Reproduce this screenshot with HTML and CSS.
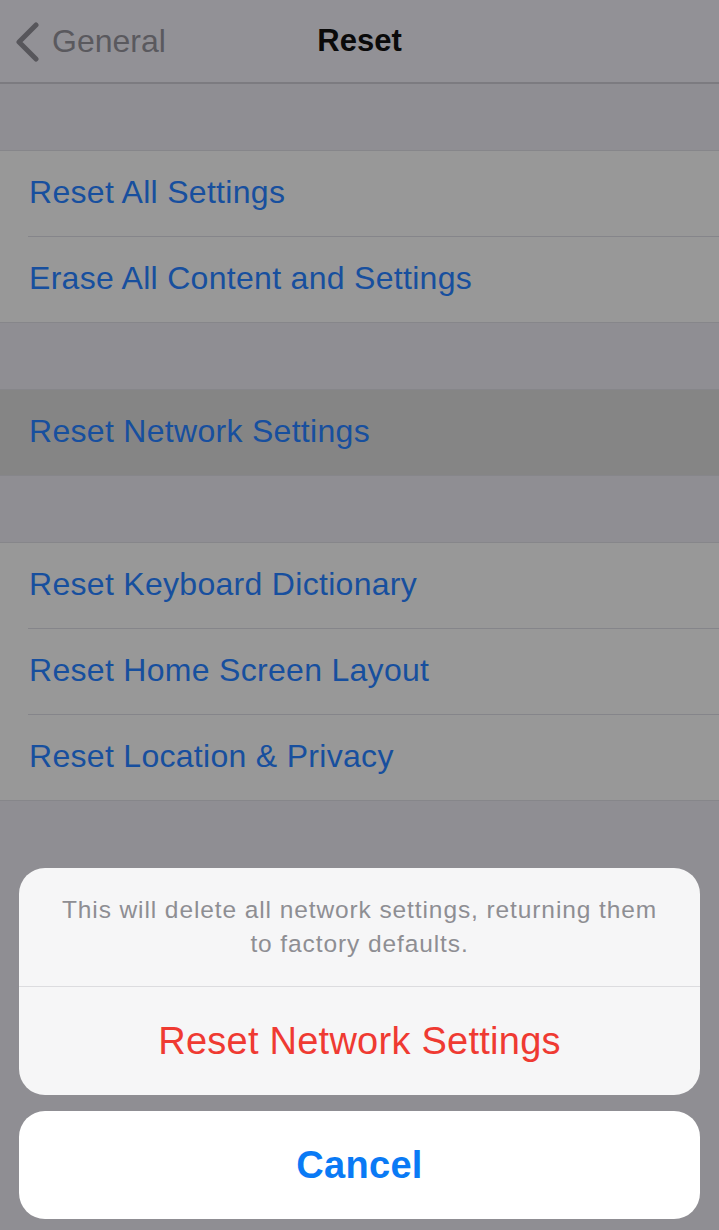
FILE: index.html
```html
<!DOCTYPE html>
<html>
<head>
<meta charset="utf-8">
<link rel="stylesheet" href="styles.css">
</head>
<body>
<div class="screen">
  <header class="nav">
    <div class="back">
      <svg class="chev" width="26" height="40" viewBox="0 0 26 40"><path d="M22 3 L5 20 L22 37" fill="none" stroke="#57565b" stroke-width="5" stroke-linecap="round" stroke-linejoin="round"/></svg>
      <span class="back-label">General</span>
    </div>
    <div class="title">Reset</div>
  </header>
  <div class="gap"></div>
  <section class="group">
    <div class="cell"><span>Reset All Settings</span></div>
    <div class="cell"><span>Erase All Content and Settings</span></div>
  </section>
  <div class="gap"></div>
  <section class="group">
    <div class="cell selected"><span>Reset Network Settings</span></div>
  </section>
  <div class="gap"></div>
  <section class="group">
    <div class="cell"><span>Reset Keyboard Dictionary</span></div>
    <div class="cell"><span>Reset Home Screen Layout</span></div>
    <div class="cell"><span>Reset Location &amp; Privacy</span></div>
  </section>
  <div class="fill"></div>
  <div class="sheet">
    <div class="sheet-group">
      <div class="message">This will delete all network settings, returning them to factory defaults.</div>
      <div class="action destructive">Reset Network Settings</div>
    </div>
    <div class="cancel">Cancel</div>
  </div>
</div>
</body>
</html>
```
FILE: styles.css
```css
html, body {
  margin: 0;
  padding: 0;
}
body {
  width: 719px;
  height: 1230px;
  overflow: hidden;
  background: #8f8e93;
  font-family: "Liberation Sans", Arial, sans-serif;
}
.screen {
  height: 1230px;
  display: flex;
  flex-direction: column;
}
.nav {
  height: 82px;
  background: #929196;
  border-bottom: 2px solid #7c7b80;
  display: flex;
  align-items: center;
  position: relative;
  flex-shrink: 0;
}
.back {
  display: flex;
  align-items: center;
  padding-left: 14px;
  gap: 12px;
}
.chev {
  display: block;
  margin-top: 1px;
}
.back-label {
  font-size: 32px;
  color: #5a595e;
  letter-spacing: 0px;
}
.title {
  position: absolute;
  left: 0;
  right: 0;
  top: 0;
  height: 82px;
  line-height: 82px;
  text-align: center;
  font-size: 31px;
  font-weight: bold;
  color: #0a0a0a;
}
.gap {
  height: 66px;
  flex-shrink: 0;
}
.group {
  background: #989898;
  border-top: 1px solid #86868a;
  border-bottom: 1px solid #86868a;
  flex-shrink: 0;
}
.cell {
  height: 85px;
  display: flex;
  align-items: center;
  padding-left: 29px;
  position: relative;
  font-size: 32px;
  color: #174f9e;
  letter-spacing: 0.3px;
}
.cell + .cell {
  border-top: 1px solid #85858a;
  margin-left: 28px;
  padding-left: 1px;
}
.cell.selected {
  background: #858585;
}
.cell span {
  margin-top: -2px;
}
.fill {
  flex: 1;
}
.sheet {
  padding: 0 19px 11px 19px;
  display: flex;
  flex-direction: column;
  gap: 16px;
  flex-shrink: 0;
}
.sheet-group {
  background: #f6f6f7;
  border-radius: 26px;
  overflow: hidden;
}
.message {
  height: 119px;
  box-sizing: border-box;
  padding: 25px 40px 0 40px;
  text-align: center;
  font-size: 24.5px;
  line-height: 34px;
  color: #8e8e93;
  letter-spacing: 0.9px;
  border-bottom: 1px solid #dcdcdf;
}
.action {
  height: 108px;
  display: flex;
  align-items: center;
  justify-content: center;
  font-size: 38px;
  letter-spacing: 0.25px;
  box-sizing: border-box;
}
.destructive {
  color: #ef3a32;
}
.cancel {
  height: 108px;
  background: #ffffff;
  border-radius: 26px;
  display: flex;
  align-items: center;
  justify-content: center;
  font-size: 38px;
  font-weight: bold;
  color: #0a7af5;
  letter-spacing: 0.3px;
  box-sizing: border-box;
}
```
